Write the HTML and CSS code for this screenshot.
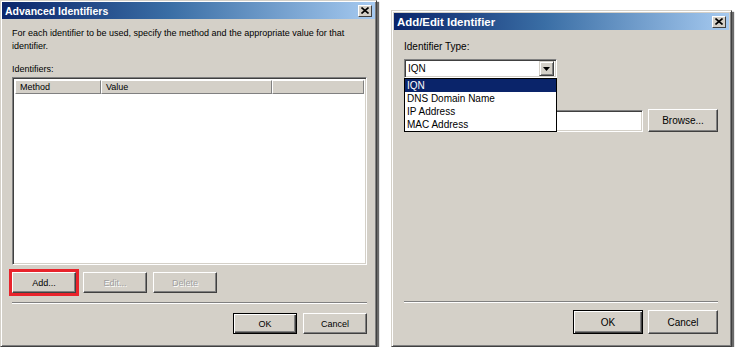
FILE: index.html
```html
<!DOCTYPE html>
<html lang="en">
<head>
    <meta charset="UTF-8">
    <title>Identifiers</title>
    <link rel="stylesheet" href="styles.css">
</head>
<body>
    <div class="dialog dialog-left">
        <div class="titlebar">
            <span class="title">Advanced Identifiers</span>
            <span class="close">
                <svg width="8" height="7" viewBox="0 0 8 7"><path d="M0.5 0.5 L7.5 6.5 M7.5 0.5 L0.5 6.5" stroke="#000" stroke-width="1.6"/></svg>
            </span>
        </div>
        <div class="content">
            <p class="intro">For each identifier to be used, specify the method and the appropriate value for that identifier.</p>
            <p class="label">Identifiers:</p>
            <div class="listview">
                <div class="list-head">
                    <span class="col col-method">Method</span>
                    <span class="col col-value">Value</span>
                    <span class="col col-fill"></span>
                </div>
            </div>
            <div class="row-buttons">
                <button class="btn btn-add">Add...</button>
                <button class="btn" disabled>Edit...</button>
                <button class="btn" disabled>Delete</button>
            </div>
            <div class="footer">
                <div class="separator"></div>
                <div class="footer-buttons">
                    <button class="btn default">OK</button>
                    <button class="btn">Cancel</button>
                </div>
            </div>
        </div>
    </div>

    <div class="dialog dialog-right">
        <div class="titlebar">
            <span class="title">Add/Edit Identifier</span>
            <span class="close">
                <svg width="8" height="7" viewBox="0 0 8 7"><path d="M0.5 0.5 L7.5 6.5 M7.5 0.5 L0.5 6.5" stroke="#000" stroke-width="1.6"/></svg>
            </span>
        </div>
        <div class="content">
            <p class="label">Identifier Type:</p>
            <div class="combo-wrap">
                <div class="combo">
                    <span class="combo-text">IQN</span>
                    <span class="combo-arrow">
                        <svg width="7" height="4" viewBox="0 0 7 4"><path d="M0 0 H7 L3.5 4 Z" fill="#000"/></svg>
                    </span>
                </div>
                <!-- open dropdown over the form -->
                <ul class="dropdown">
                    <li class="selected">IQN</li>
                    <li>DNS Domain Name</li>
                    <li>IP Address</li>
                    <li>MAC Address</li>
                </ul>
            </div>
            <div class="value-row">
                <div class="textbox"></div>
                <button class="btn">Browse...</button>
            </div>
            <div class="footer">
                <div class="separator"></div>
                <div class="footer-buttons">
                    <button class="btn default">OK</button>
                    <button class="btn">Cancel</button>
                </div>
            </div>
        </div>
    </div>
</body>
</html>
```

FILE: styles.css
```css
* {
    box-sizing: border-box;
}

body {
    margin: 0;
    background: #fff;
    font-family: "Liberation Sans", Arial, sans-serif;
    color: #000;
    display: flex;
    align-items: flex-start;
}

p {
    margin: 0;
}

/* window frame */
.dialog {
    background: #d4d0c8;
    border: 1px solid;
    border-color: #d4d0c8 #404040 #404040 #d4d0c8;
    box-shadow: inset 1px 1px #fff, inset -1px -1px #808080, 2px 2px 1px #6a6a6a;
    display: flex;
    flex-direction: column;
}

.dialog-left {
    width: 377px;
    height: 347px;
    padding: 1px;
    font-size: 9px;
}

.dialog-right {
    width: 341px;
    height: 337px;
    margin: 10px 0 0 14px;
    padding: 2px;
    font-size: 10px;
}

.titlebar {
    height: 17px;
    flex-shrink: 0;
    display: flex;
    align-items: center;
    justify-content: space-between;
    padding: 0 3px 0 3px;
    background: linear-gradient(to right, #0a246a, #3a6ea5 45%, #a6caf0);
}

.title {
    color: #fff;
    font-weight: bold;
    font-size: 10.5px;
}

.dialog-right .title {
    font-size: 11.4px;
}

.close {
    width: 14px;
    height: 12px;
    background: #d4d0c8;
    border: 1px solid;
    border-color: #fff #404040 #404040 #fff;
    display: flex;
    align-items: center;
    justify-content: center;
}

.content {
    flex: 1;
    display: flex;
    flex-direction: column;
}

.dialog-left .content {
    padding: 8px 8px 11px 10px;
}

.dialog-right .content {
    padding: 10px 11px 10px 10px;
}

.intro {
    line-height: 13px;
}

.label {
    line-height: 13px;
}

.dialog-left .label {
    margin-top: 10px;
}

/* list view */
.listview {
    margin-top: 1px;
    height: 188px;
    background: #fff;
    border: 1px solid;
    border-color: #808080 #fff #fff #808080;
    box-shadow: inset 1px 1px #404040, inset -1px -1px #d4d0c8;
    padding: 2px;
}

.list-head {
    display: flex;
    height: 14px;
}

.col {
    background: #d4d0c8;
    border: 1px solid;
    border-color: #fff #808080 #808080 #fff;
    line-height: 12px;
    padding-left: 4px;
}

.col-method {
    width: 86px;
}

.col-value {
    width: 171px;
}

.col-fill {
    flex: 1;
}

/* buttons */
.btn {
    font-family: inherit;
    font-size: inherit;
    color: #000;
    background: #d4d0c8;
    border: 1px solid;
    border-color: #fff #404040 #404040 #fff;
    box-shadow: inset -1px -1px #808080;
    padding: 0;
    height: 21px;
    width: 64px;
}

.btn:disabled {
    color: #a0a0a0;
    text-shadow: 1px 1px #fff;
}

.btn.default {
    border-color: #000;
    box-shadow: inset 1px 1px #fff, inset -1px -1px #404040, inset -2px -2px #808080;
}

.row-buttons {
    display: flex;
    gap: 6px;
    margin-top: 7px;
}

.btn-add {
    outline: 3px solid #e8232b;
    margin-right: 1px;
}

.footer {
    margin-top: auto;
}

.separator {
    border-top: 1px solid #808080;
    border-bottom: 1px solid #fff;
}

.footer-buttons {
    display: flex;
    justify-content: flex-end;
    gap: 6px;
    margin-top: 9px;
}

.dialog-right .btn {
    width: 70px;
    height: 24px;
}

.dialog-right .footer-buttons {
    gap: 5px;
    margin-top: 7px;
}

/* combo box */
.combo-wrap {
    position: relative;
    margin-top: 6px;
    width: 153px;
}

.combo {
    height: 19px;
    background: #fff;
    border: 1px solid;
    border-color: #808080 #fff #fff #808080;
    box-shadow: inset 1px 1px #404040, inset -1px -1px #d4d0c8;
    display: flex;
    align-items: center;
    padding: 2px;
}

.combo-text {
    flex: 1;
    padding-left: 1px;
}

.combo-arrow {
    width: 15px;
    height: 15px;
    background: #d4d0c8;
    border: 1px solid;
    border-color: #d4d0c8 #404040 #404040 #d4d0c8;
    box-shadow: inset 1px 1px #fff, inset -1px -1px #808080;
    display: flex;
    align-items: center;
    justify-content: center;
}

.dropdown {
    position: absolute;
    left: 0;
    top: 19px;
    width: 153px;
    margin: 0;
    padding: 0;
    list-style: none;
    background: #fff;
    border: 1px solid #000;
    z-index: 2;
}

.dropdown li {
    line-height: 13px;
    padding-left: 2px;
}

.dropdown li.selected {
    background: #0a246a;
    color: #fff;
}

.value-row {
    display: flex;
    align-items: flex-end;
    gap: 5px;
    margin-top: 31px;
}

.textbox {
    flex: 1;
    height: 22px;
    background: #fff;
    border: 1px solid;
    border-color: #808080 #fff #fff #808080;
    box-shadow: inset 1px 1px #404040, inset -1px -1px #d4d0c8;
}

.value-row .btn {
    height: 23px;
}
```
